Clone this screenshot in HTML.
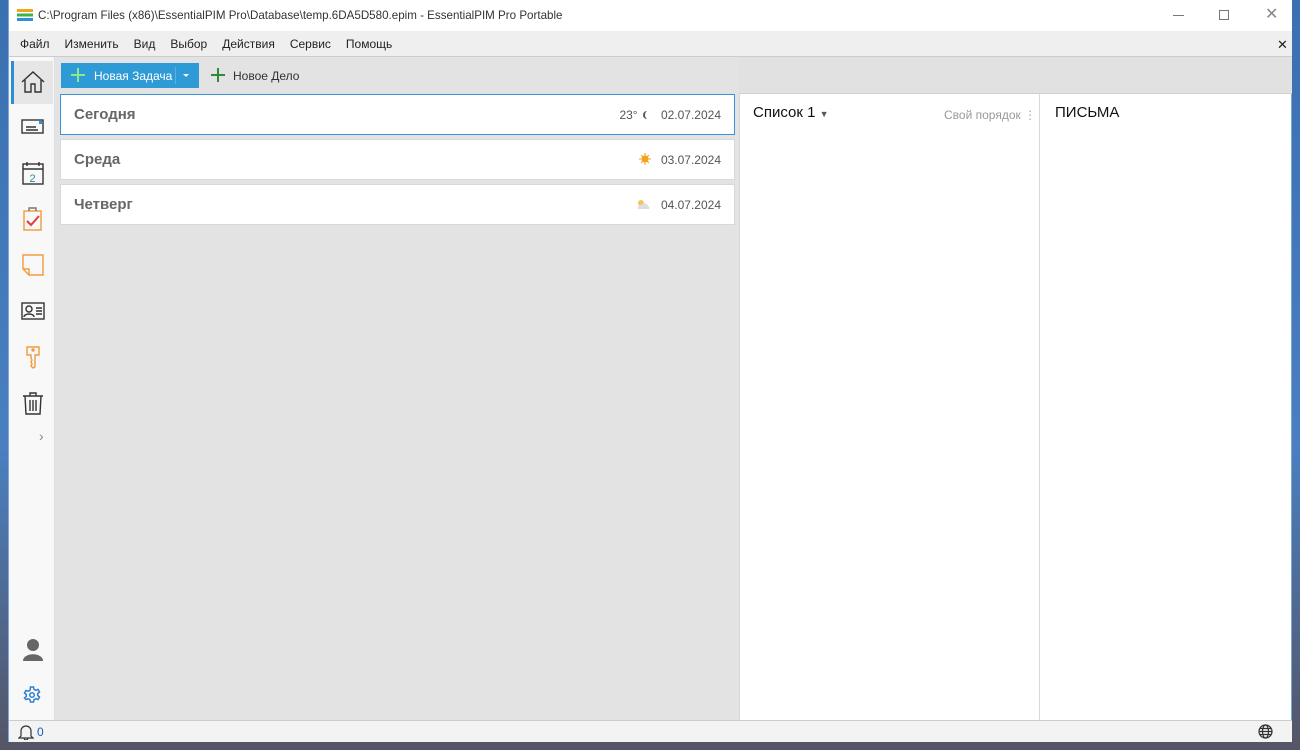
<!DOCTYPE html>
<html><head><meta charset="utf-8"><style>
*{box-sizing:border-box;margin:0;padding:0}
body{width:1300px;height:750px;overflow:hidden;background:linear-gradient(180deg,#3a6fb0,#4a7fc0 60%,#556 100%);font-family:"Liberation Sans","DejaVu Sans",sans-serif;position:relative}
.win{position:absolute;left:8px;top:0;width:1284px;height:742px;background:#fff;border:1px solid #7aa7d8;border-top:none}
.abs{position:absolute}
.t{font-size:12px;color:#222;white-space:nowrap}
.menu span{margin-right:15px}
.card{position:absolute;left:51px;width:675px;height:41px;background:#fff;border:1px solid #d8d8d8}
.card .n{position:absolute;left:13px;top:11px;font-size:15px;line-height:18px;font-weight:bold;color:#666}
.card .d{position:absolute;right:13px;top:13px;font-size:12px;line-height:14px;color:#555}
</style></head><body>
<div class="win">
 <div class="abs" style="left:0;top:0;width:1283px;height:31px;background:#fff"></div>
 <svg class="abs" style="left:7px;top:8px" width="18" height="14"><rect x="1" y="1" width="16" height="3" fill="#f2a41f"/><rect x="1" y="5.5" width="16" height="3" fill="#3bb34a"/><rect x="1" y="10" width="16" height="3" fill="#2f8fd8"/></svg>
 <div class="abs t" style="left:29px;top:9px;color:#333;font-size:11.6px">C:\Program Files (x86)\EssentialPIM Pro\Database\temp.6DA5D580.epim - EssentialPIM Pro Portable</div>
 <div class="abs" style="left:1164px;top:15px;width:11px;height:1px;background:#777"></div>
 <div class="abs" style="left:1210px;top:10px;width:10px;height:10px;border:1px solid #777"></div>
 <div class="abs" style="left:1256px;top:4px;font-size:16px;color:#888">✕</div>
 <div class="abs" style="left:0;top:31px;width:1283px;height:26px;background:#efefef;border-bottom:1px solid #ccc"></div>
 <div class="abs t menu" style="left:11px;top:37px"><span>Файл</span><span>Изменить</span><span>Вид</span><span>Выбор</span><span>Действия</span><span>Сервис</span><span>Помощь</span></div>
 <div class="abs" style="left:1268px;top:37px;font-size:13px;font-weight:bold;color:#222">✕</div>
 <div class="abs" style="left:46px;top:57px;width:684px;height:663px;background:#e3e3e3"></div>
 <div class="abs" style="left:730px;top:57px;width:553px;height:37px;background:#e1e1e1;border-bottom:1px solid #d0d0d0"></div>
 <div class="abs" style="left:52px;top:63px;width:138px;height:25px;background:#2e9ad6"></div>
 <div class="abs" style="left:166px;top:67px;width:1px;height:17px;background:#5bb0e0"></div>
 <svg class="abs" style="left:61px;top:67px" width="16" height="16"><path d="M8 1v14M1 8h14" stroke="#8ee88e" stroke-width="2"/></svg>
 <div class="abs t" style="left:85px;top:69px;color:#fff">Новая Задача</div>
 <div class="abs" style="left:174px;top:74px;border-left:3px solid transparent;border-right:3px solid transparent;border-top:3px solid #fff"></div>
 <svg class="abs" style="left:201px;top:67px" width="16" height="16"><path d="M8 1v14M1 8h14" stroke="#2e8b3a" stroke-width="2"/></svg>
 <div class="abs t" style="left:224px;top:69px;color:#333">Новое Дело</div>
 <div class="abs" style="left:0;top:57px;width:46px;height:663px;background:#f8f8f8;border-right:1px solid #e0e0e0"></div>
 <div class="abs" style="left:2px;top:61px;width:42px;height:43px;background:#e6e6e6;border-left:3px solid #2e8ed6"></div>
 <svg class="abs" style="left:12px;top:70px" width="24" height="24" fill="none" stroke="#333" stroke-width="1.4"><path d="M1 12L12 2l11 10M4 10v12h6v-8h4v8h6V10"/></svg>
 <svg class="abs" style="left:12px;top:118px" width="24" height="18" fill="none" stroke="#333" stroke-width="1.4"><rect x="1" y="2" width="21" height="13"/><path d="M5 9h10M5 12h12"/><rect x="18" y="3" width="3" height="3" fill="#2e8ed6" stroke="none"/></svg>
 <svg class="abs" style="left:12px;top:161px" width="24" height="24" fill="none" stroke="#333" stroke-width="1.4"><rect x="2" y="3" width="20" height="20"/><path d="M2 8h20M6 1v4M18 1v4"/><text x="8.5" y="21" font-size="11" fill="#2a8a9a" stroke="none" font-family="Liberation Sans">2</text></svg>
 <svg class="abs" style="left:13px;top:207px" width="22" height="24" fill="none" stroke-width="1.4"><rect x="2" y="4" width="17" height="19" stroke="#f39a3a"/><path d="M7 4V1h7v3" stroke="#777"/><path d="M5 14l4 4 8-9" stroke="#e23b3b" stroke-width="2"/></svg>
 <svg class="abs" style="left:12px;top:253px" width="24" height="24" fill="none" stroke="#f39a3a" stroke-width="1.4"><path d="M2 2h20v20H8l-6-6z M2 16h6v6"/></svg>
 <svg class="abs" style="left:12px;top:301px" width="24" height="20" fill="none" stroke="#333" stroke-width="1.4"><rect x="1" y="2" width="22" height="16"/><circle cx="8" cy="8" r="3"/><path d="M3 16c0-4 10-4 10 0M15 7h6M15 10h6M15 13h6"/></svg>
 <svg class="abs" style="left:16px;top:345px" width="16" height="24" fill="none" stroke="#f39a3a" stroke-width="1.4"><path d="M2 2h12v8H10v12l-2 1-2-2 1-2-1-2 1-2-1-2V10H2z"/><circle cx="8" cy="5" r="1" fill="#f39a3a"/></svg>
 <svg class="abs" style="left:13px;top:391px" width="22" height="24" fill="none" stroke="#333" stroke-width="1.4"><path d="M1 5h20M8 5V2h6v3M3 5l1 18h14l1-18M8 9v11M11 9v11M14 9v11"/></svg>
 <div class="abs" style="left:30px;top:428px;font-size:14px;color:#888">›</div>
 <svg class="abs" style="left:13px;top:637px" width="22" height="24" fill="#666"><circle cx="11" cy="8" r="6"/><path d="M1 24c0-9 20-9 20 0z"/></svg>
 <svg class="abs" style="left:14px;top:686px" width="18" height="18" fill="none" stroke="#2e7fcf" stroke-width="1.5"><path d="M7.5 1h3l.5 2.3 1.8 1 2.2-.9 1.5 2.6-1.8 1.5v2l1.8 1.5-1.5 2.6-2.2-.9-1.8 1-.5 2.3h-3l-.5-2.3-1.8-1-2.2.9L1.5 12l1.8-1.5v-2L1.5 7 3 4.4l2.2.9 1.8-1z"/><circle cx="9" cy="9" r="2.3"/></svg>
 <div class="card" style="top:94px;border-color:#3a93dd"><div class="n">Сегодня</div><div class="d">23° <svg width="10" height="10" style="vertical-align:-1px"><path d="M6 1a4 4 0 100 8 5 5 0 010-8z" fill="#555"/></svg>&nbsp;&nbsp; 02.07.2024</div></div>
 <div class="card" style="top:139px"><div class="n">Среда</div><div class="d"><svg width="12" height="12" style="vertical-align:-1px"><circle cx="6" cy="6" r="3.5" fill="#f3a21a"/><path d="M6 0v12M0 6h12M2 2l8 8M10 2l-8 8" stroke="#f3a21a" stroke-width="1"/></svg>&nbsp;&nbsp; 03.07.2024</div></div>
 <div class="card" style="top:184px"><div class="n">Четверг</div><div class="d"><svg width="16" height="11" style="vertical-align:-1px"><circle cx="6" cy="4" r="3" fill="#f5c560"/><path d="M3 10a3 3 0 013-4 4 4 0 017 1 2 2 0 011 3z" fill="#ddd"/></svg>&nbsp;&nbsp; 04.07.2024</div></div>
 <div class="abs" style="left:730px;top:94px;width:301px;height:626px;background:#fff;border-left:1px solid #d8d8d8;border-right:1px solid #d8d8d8"></div>
 <div class="abs" style="left:744px;top:104px;font-size:15px;color:#111">Список 1 <span style="font-size:9px;color:#555">▼</span></div>
 <div class="abs t" style="left:935px;top:108px;color:#999">Свой порядок <span style="color:#aaa">⋮</span></div>
 <div class="abs" style="left:1046px;top:104px;font-size:15px;color:#111">ПИСЬМА</div>
 <div class="abs" style="left:0;top:720px;width:1283px;height:22px;background:#f3f3f3;border-top:1px solid #ccc"></div>
 <svg class="abs" style="left:9px;top:724px" width="16" height="16" fill="none" stroke="#333" stroke-width="1.2"><path d="M3 12V7a5 5 0 0110 0v5l2 2H1zM6 14a2 2 0 004 0"/></svg>
 <div class="abs t" style="left:28px;top:725px;color:#1a5fb4">0</div>
 <svg class="abs" style="left:1249px;top:724px" width="15" height="15" fill="none" stroke="#333" stroke-width="1.2"><circle cx="7.5" cy="7.5" r="6.5"/><ellipse cx="7.5" cy="7.5" rx="3" ry="6.5"/><path d="M1 7.5h13M2 4.5h11M2 10.5h11"/></svg>
</div>
</body></html>
